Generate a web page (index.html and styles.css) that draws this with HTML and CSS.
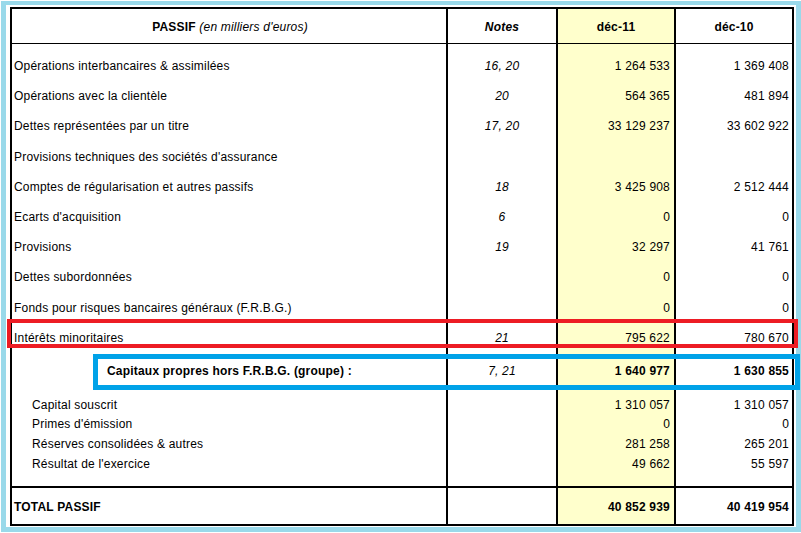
FILE: index.html
```html
<!DOCTYPE html>
<html lang="fr">
<head>
<meta charset="utf-8">
<title>Passif</title>
<link rel="stylesheet" href="styles.css">
</head>
<body>
<div class="frame">
  <div class="sheet">
    <div class="row head">
      <div class="cell title"><b>PASSIF</b>&nbsp;<i>(en milliers d'euros)</i></div>
      <div class="cell notes hnotes">Notes</div>
      <div class="cell hyear cur">déc-11</div>
      <div class="cell hyear">déc-10</div>
    </div>
    <div class="row line first">
      <div class="cell label">Opérations interbancaires &amp; assimilées</div>
      <div class="cell notes">16, 20</div>
      <div class="cell num cur">1&nbsp;264&nbsp;533</div>
      <div class="cell num prev">1&nbsp;369&nbsp;408</div>
    </div>
    <div class="row line">
      <div class="cell label">Opérations avec la clientèle</div>
      <div class="cell notes">20</div>
      <div class="cell num cur">564&nbsp;365</div>
      <div class="cell num prev">481&nbsp;894</div>
    </div>
    <div class="row line">
      <div class="cell label">Dettes représentées par un titre</div>
      <div class="cell notes">17, 20</div>
      <div class="cell num cur">33&nbsp;129&nbsp;237</div>
      <div class="cell num prev">33&nbsp;602&nbsp;922</div>
    </div>
    <div class="row line">
      <div class="cell label">Provisions techniques des sociétés d'assurance</div>
      <div class="cell notes"></div>
      <div class="cell num cur"></div>
      <div class="cell num prev"></div>
    </div>
    <div class="row line">
      <div class="cell label">Comptes de régularisation et autres passifs</div>
      <div class="cell notes">18</div>
      <div class="cell num cur">3&nbsp;425&nbsp;908</div>
      <div class="cell num prev">2&nbsp;512&nbsp;444</div>
    </div>
    <div class="row line">
      <div class="cell label">Ecarts d'acquisition</div>
      <div class="cell notes">6</div>
      <div class="cell num cur">0</div>
      <div class="cell num prev">0</div>
    </div>
    <div class="row line">
      <div class="cell label">Provisions</div>
      <div class="cell notes">19</div>
      <div class="cell num cur">32&nbsp;297</div>
      <div class="cell num prev">41&nbsp;761</div>
    </div>
    <div class="row line">
      <div class="cell label">Dettes subordonnées</div>
      <div class="cell notes"></div>
      <div class="cell num cur">0</div>
      <div class="cell num prev">0</div>
    </div>
    <div class="row line">
      <div class="cell label">Fonds pour risques bancaires généraux (F.R.B.G.)</div>
      <div class="cell notes"></div>
      <div class="cell num cur">0</div>
      <div class="cell num prev">0</div>
    </div>
    <div class="row line">
      <div class="cell label">Intérêts minoritaires</div>
      <div class="cell notes">21</div>
      <div class="cell num cur">795&nbsp;622</div>
      <div class="cell num prev">780&nbsp;670</div>
    </div>
    <div class="row equity">
      <div class="cell label eqlabel">Capitaux propres hors F.R.B.G. (groupe) :</div>
      <div class="cell notes">7, 21</div>
      <div class="cell num cur">1&nbsp;640&nbsp;977</div>
      <div class="cell num prev">1&nbsp;630&nbsp;855</div>
    </div>
    <div class="row sub subfirst">
      <div class="cell label sublabel">Capital souscrit</div>
      <div class="cell notes"></div>
      <div class="cell num cur">1&nbsp;310&nbsp;057</div>
      <div class="cell num prev">1&nbsp;310&nbsp;057</div>
    </div>
    <div class="row sub">
      <div class="cell label sublabel">Primes d'émission</div>
      <div class="cell notes"></div>
      <div class="cell num cur">0</div>
      <div class="cell num prev">0</div>
    </div>
    <div class="row sub">
      <div class="cell label sublabel">Réserves consolidées &amp; autres</div>
      <div class="cell notes"></div>
      <div class="cell num cur">281&nbsp;258</div>
      <div class="cell num prev">265&nbsp;201</div>
    </div>
    <div class="row sub sublast">
      <div class="cell label sublabel">Résultat de l'exercice</div>
      <div class="cell notes"></div>
      <div class="cell num cur">49&nbsp;662</div>
      <div class="cell num prev">55&nbsp;597</div>
    </div>
    <div class="row total">
      <div class="cell label">TOTAL PASSIF</div>
      <div class="cell notes"></div>
      <div class="cell num cur">40&nbsp;852&nbsp;939</div>
      <div class="cell num prev">40&nbsp;419&nbsp;954</div>
    </div>
  </div>
  <div class="mark mark-red"></div>
  <div class="mark mark-blue"></div>
</div>
</body>
</html>
```

FILE: styles.css
```css
html, body {
  margin: 0;
  padding: 0;
  background: #ffffff;
}

body {
  font-family: "Liberation Sans", Arial, sans-serif;
  font-size: 12px;
  letter-spacing: 0.2px;
  color: #000000;
}

.frame {
  position: relative;
  margin: 1px 0 0 1px;
  width: 784px;
  height: 519px;
  border-style: solid;
  border-color: #99d9ea;
  border-width: 4px 5px 5px 5px;
  padding: 2px 2px 1px 4px;
}

.sheet {
  box-sizing: border-box;
  width: 784px;
  height: 519px;
  border: 2px solid #000000;
  background: #ffffff;
}

.row {
  display: grid;
  grid-template-columns: 434px 110px 118px 118px;
}

.cell {
  box-sizing: border-box;
  display: flex;
  align-items: center;
  white-space: nowrap;
  overflow: visible;
}

.cell + .cell {
  border-left: 2px solid #000000;
}

.cur {
  background: #ffffcc;
}

.head {
  height: 35px;
}

.head .cell {
  border-bottom: 1px solid #000000;
  justify-content: center;
  padding-top: 1px;
}

.title {
  padding-left: 2px;
}

.hnotes {
  font-weight: bold;
  font-style: italic;
}

.hyear {
  font-weight: bold;
}

.line {
  height: 30.2px;
}

.line.first {
  height: 37.2px;
}

.line.first .cell {
  padding-top: 7px;
}

.label {
  padding-left: 2px;
}

.notes {
  justify-content: center;
  font-style: italic;
}

.num {
  justify-content: flex-end;
}

.num.cur {
  padding-right: 4px;
}

.num.prev {
  padding-right: 3px;
}

.equity {
  height: 36px;
}

.equity .cell {
  padding-top: 1px;
}

.equity .label,
.equity .num {
  font-weight: bold;
}

.eqlabel {
  padding-left: 95px;
}

.sub {
  height: 19.7px;
}

.sub.subfirst {
  height: 25.7px;
}

.sub.subfirst .cell {
  padding-top: 6px;
}

.sub.sublast {
  height: 31.8px;
}

.sub.sublast .cell {
  padding-bottom: 12px;
}

.sublabel {
  padding-left: 20px;
}

.total {
  height: 38px;
}

.total .cell {
  border-top: 2px solid #000000;
  padding-top: 2px;
  font-weight: bold;
}

.mark {
  position: absolute;
  box-sizing: border-box;
  pointer-events: none;
}

.mark-red {
  left: 1px;
  top: 314px;
  width: 791px;
  height: 29px;
  border: 4px solid #ed1c24;
}

.mark-blue {
  left: 87px;
  top: 349px;
  width: 707px;
  height: 36px;
  border: 5px solid #00a2e8;
}
```
